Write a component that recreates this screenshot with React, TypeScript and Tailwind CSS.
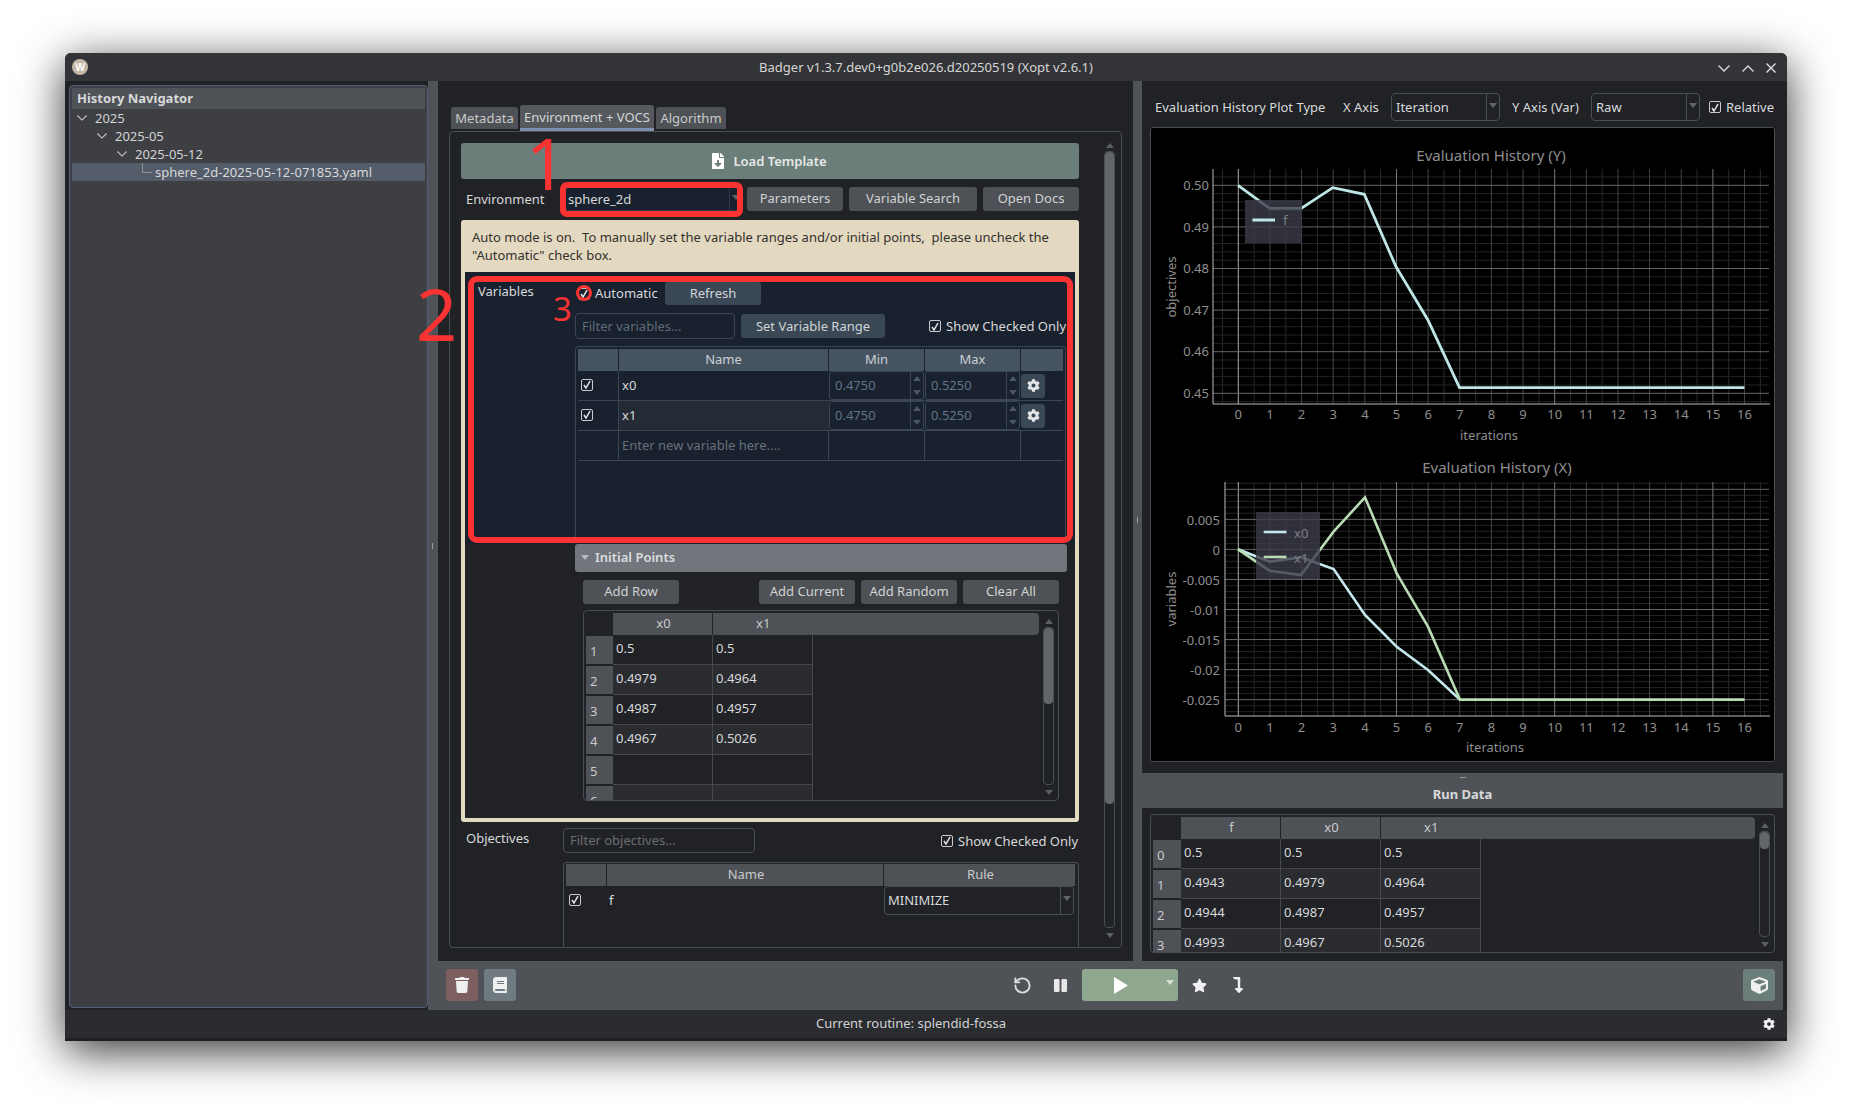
import React from "react";
import { FaCog, FaFileDownload, FaTrash, FaBook, FaPause, FaStar, FaCube, FaLevelDownAlt } from "react-icons/fa";
import { RotateCcw } from "lucide-react";

const Tri = ({ up = false, className = "" }: { up?: boolean; className?: string }) => (
  <svg width="8" height="5" viewBox="0 0 8 5" className={className}>
    <path d={up ? "M0 5 L4 0 L8 5 Z" : "M0 0 L8 0 L4 5 Z"} fill="currentColor" />
  </svg>
);

const Chev = ({ up = false, w = 12, h = 7 }: { up?: boolean; w?: number; h?: number }) => (
  <svg width={w} height={h} viewBox="0 0 12 7" className="shrink-0">
    <path d={up ? "M0.5 6.5 L6 1 L11.5 6.5" : "M0.5 0.5 L6 6 L11.5 0.5"} stroke="currentColor" strokeWidth="1.3" fill="none" />
  </svg>
);

const Check = ({ className = "" }: { className?: string }) => (
  <span className={`flex h-[12px] w-[12px] shrink-0 items-center justify-center rounded-[2px] border border-[#c9cbcd] ${className}`}>
    <svg width="8" height="9" viewBox="0 0 8 9">
      <path d="M1 5 L3 8 L7 1" stroke="#e8e8e8" strokeWidth="1.5" fill="none" />
    </svg>
  </span>
);

const Btn = ({ children, className = "" }: { children: React.ReactNode; className?: string }) => (
  <div className={`flex h-[24px] w-[96px] shrink-0 items-center justify-center rounded-[3px] bg-[#4e5156] pb-[2px] text-[#d2d3d4] ${className}`}>{children}</div>
);

const Combo = ({ text, className = "", textCls = "pl-[4px]", border = "border-[#4b4e53]" }: { text: string; className?: string; textCls?: string; border?: string }) => (
  <div className={`flex shrink-0 items-center rounded-[4px] border ${border} ${className}`}>
    <span className={`flex-1 text-[#d8d9da] ${textCls}`}>{text}</span>
    <span className={`flex h-full w-[13px] items-center justify-center border-l ${border} pb-[4px] text-[#62666b]`}>
      <Tri />
    </span>
  </div>
);

const Scroll = ({ thumb, className = "", arrowCls = "mt-[6px]" }: { thumb: number; className?: string; arrowCls?: string }) => (
  <div className={`flex h-full w-[11px] shrink-0 flex-col items-center text-[#5b5e63] ${className}`}>
    <Tri up className={`shrink-0 ${arrowCls}`} />
    <div className="mt-[3px] w-full flex-1 rounded-[4px] border border-[#4a4d52]">
      <div className="rounded-[4px] bg-[#62656a]" style={{ height: thumb }} />
    </div>
    <Tri className="mb-[5px] mt-[5px] shrink-0" />
  </div>
);

type TableProps = { heads: string[]; rows: string[][]; labels: string[]; corner: number; thumb: number; className?: string };
const DataTable = ({ heads, rows, labels, corner, thumb, className = "" }: TableProps) => (
  <div className={`flex rounded-[4px] border border-[#4a4d52] pl-[2px] pr-[4px] pt-[2px] ${className}`}>
    <div className="flex-1 overflow-hidden">
      <div className="flex h-[22px] text-[#c9cacb]">
        <div style={{ width: corner }} />
        {heads.map((h, i) => (
          <div key={h} className={`mr-[1px] flex items-center bg-[#4e5156] pb-[2px] ${i === heads.length - 1 ? "flex-1 justify-start rounded-r-[4px] pl-[43px]" : "w-[99px] justify-center pl-[2px]"}`}>
            {h}
          </div>
        ))}
      </div>
      {rows.map((row, i) => (
        <div key={i} className="flex h-[30px]">
          <div className="mb-[1px] mt-[1px] flex items-end bg-[#4e5156] pb-[4px] pl-[4px] text-[#c9cacb]" style={{ width: corner }}>
            {labels[i]}
          </div>
          {row.map((c, j) => (
            <div key={j} className={`flex w-[100px] items-start border-b border-r border-[#46484c] pl-[3px] pt-[4px] text-[#d8d9da] ${i % 2 ? "bg-[#2a2c30]" : "bg-[#202226]"}`}>
              {c}
            </div>
          ))}
        </div>
      ))}
    </div>
    <Scroll thumb={thumb} className="ml-[3px]" />
  </div>
);

const CheckedOnly = ({ className = "" }: { className?: string }) => (
  <div className={`flex items-center gap-[5px] text-[#d8d9da] ${className}`}>
    <Check />
    <span className="whitespace-nowrap">Show Checked Only</span>
  </div>
);

const Spin = ({ v }: { v: string }) => (
  <div className="flex h-[29px] w-[95px] items-center rounded-[3px] border border-[#3a4654] text-[#62748a]">
    <span className="flex-1 pb-[1px] pl-[5px]">{v}</span>
    <span className="flex h-full w-[13px] flex-col items-center justify-around border-l border-[#3a4654] text-[#4a5666]">
      <Tri up />
      <Tri />
    </span>
  </div>
);

const VarRow = ({ name, min, max, alt }: { name: string; min: string; max: string; alt?: boolean }) => (
  <div className="grid h-[30px] grid-cols-[41px_210px_96px_96px_43px] border-b border-[#3a4654]">
    <div className="flex items-center border-r border-[#3a4654] pb-[2px] pl-[3px]"><Check /></div>
    <div className={`flex items-center pb-[2px] pl-[3px] text-[#d8dadc] ${alt ? "bg-[#252b35]" : ""}`}>{name}</div>
    <Spin v={min} />
    <Spin v={max} />
    <div className="flex items-center">
      <div className="flex h-[24px] w-[24px] items-center justify-center rounded-[3px] bg-[#3a4755] pb-[1px]">
        <FaCog size={13} color="#e4e6e8" />
      </div>
    </div>
  </div>
);

const xs = Array.from({ length: 17 }, (_, i) => 1238.3 + 31.64 * i);

const Grid = ({ left, top, bottom, yStart, yStep, yCount }: { left: number; top: number; bottom: number; yStart: number; yStep: number; yCount: number }) => {
  const right = 1769;
  const minorX: number[] = [];
  for (let i = -1; i < 17; i++) minorX.push(1238.3 + 31.64 * i + 15.82);
  const minorY: number[] = [];
  for (let k = -1; k <= yCount; k++) for (let m = 1; m < 5; m++) minorY.push(yStart + yStep * k + (yStep * m) / 5);
  return (
    <g>
      {minorX.filter((x) => x > left).map((x) => <line key={x} x1={x} x2={x} y1={top} y2={bottom} stroke="#2a2a2a" />)}
      {minorY.filter((y) => y > top && y < bottom).map((y) => <line key={y} x1={left} x2={right} y1={y} y2={y} stroke="#232323" />)}
      {xs.map((x, i) => <line key={x} x1={x} x2={x} y1={top} y2={bottom} stroke={i === 0 ? "#aaa" : i % 5 === 0 ? "#777" : "#444"} />)}
      {Array.from({ length: yCount }, (_, k) => yStart + yStep * k).map((y) => <line key={y} x1={left} x2={right} y1={y} y2={y} stroke="#666" />)}
      <line x1={left} x2={left} y1={top} y2={bottom} stroke="#bbb" />
      <line x1={left} x2={1770} y1={bottom} y2={bottom} stroke="#bbb" />
    </g>
  );
};

const tickFill = "#8e8e8e";
const Plots = () => (
  <svg width="623" height="633" viewBox="1151 128 623 633" className="block" fontFamily="Noto Sans, sans-serif" fontSize="13">
    <rect x="1151" y="128" width="623" height="634" fill="#000" />
    <text x="1491" y="161" textAnchor="middle" fill="#8f8f8f" fontSize="15">Evaluation History (Y)</text>
    <Grid left={1213} top={169} bottom={404} yStart={185.3} yStep={41.6} yCount={6} />
    {["0.50", "0.49", "0.48", "0.47", "0.46", "0.45"].map((t, i) => (
      <text key={t} x="1209" y={190 + 41.6 * i} textAnchor="end" fill={tickFill}>{t}</text>
    ))}
    {xs.map((x, i) => <text key={x} x={x} y="419" textAnchor="middle" fill={tickFill}>{i}</text>)}
    <text x="1489" y="440" textAnchor="middle" fill={tickFill}>iterations</text>
    <text transform="translate(1176 287) rotate(-90)" textAnchor="middle" fill={tickFill}>objectives</text>
    <polyline points="1238,185.3 1269.6,208.3 1301.2,208.3 1332.8,187.7 1364.3,194.3 1396,266.7 1427.9,320 1459.5,387.7 1744.4,387.7" fill="none" stroke="#bfe6e6" strokeWidth="2.8" />
    <rect x="1245" y="200" width="57" height="43" fill="rgba(60,60,74,0.8)" />
    <line x1="1252.4" x2="1275" y1="220" y2="220" stroke="#bfe6e6" strokeWidth="2.8" />
    <text x="1283" y="225" fill="#7d7d85">f</text>

    <text x="1497" y="473" textAnchor="middle" fill="#8f8f8f" fontSize="15">Evaluation History (X)</text>
    <Grid left={1225} top={482} bottom={716} yStart={489.3} yStep={30.05} yCount={8} />
    {["0.005", "0", "-0.005", "-0.01", "-0.015", "-0.02", "-0.025"].map((t, i) => (
      <text key={t} x="1220" y={524.5 + 30.05 * i} textAnchor="end" fill={tickFill}>{t}</text>
    ))}
    {xs.map((x, i) => <text key={x} x={x} y="732" textAnchor="middle" fill={tickFill}>{i}</text>)}
    <text x="1495" y="752" textAnchor="middle" fill={tickFill}>iterations</text>
    <text transform="translate(1176 599) rotate(-90)" textAnchor="middle" fill={tickFill}>variables</text>
    <polyline points="1238,549.3 1269.6,561.7 1301,557.3 1333.6,569 1365,615 1396.7,646.7 1428,670 1460,699.7 1744.4,699.7" fill="none" stroke="#c5e8ee" strokeWidth="2.6" />
    <polyline points="1238,549.3 1269.6,570.7 1301,575 1333.6,531.7 1365,497.3 1396.7,573.3 1428,626.7 1460,699.7 1744.4,699.7" fill="none" stroke="#b9dcb4" strokeWidth="2.6" />
    <rect x="1256" y="512" width="64" height="67" fill="rgba(60,60,74,0.8)" />
    <line x1="1263.7" x2="1286.5" y1="532" y2="532" stroke="#c5e8ee" strokeWidth="2.6" />
    <text x="1294" y="538" fill="#7d7d85">x0</text>
    <line x1="1263.7" x2="1286.5" y1="557" y2="557" stroke="#b9dcb4" strokeWidth="2.6" />
    <text x="1294" y="563" fill="#7d7d85">x1</text>
  </svg>
);

const TreeRow = ({ pad, label }: { pad: number; label: string }) => (
  <div className="flex h-[18px] items-center text-[#d2d3d5]" style={{ paddingLeft: pad }}>
    <span className="mr-[8px] text-[#c8c9cb]"><Chev w={10} h={6} /></span>
    {label}
  </div>
);

export default function App() {
  return (
    <div className="relative h-[1119px] w-[1852px] overflow-hidden bg-white pl-[65px] pt-[53px] font-['Noto_Sans',sans-serif] text-[13px] leading-[18px]">
      <div className="flex h-[988px] w-[1722px] flex-col rounded-t-[6px] bg-[#1f2023] shadow-[0_10px_45px_rgba(0,0,0,0.8)]">
        {/* Title bar */}
        <div className="relative flex h-[28px] shrink-0 items-center justify-center rounded-t-[6px] bg-[#333437] text-[#d6d6d6]">
          <div className="absolute left-[7px] top-[6px] flex h-[16px] w-[16px] items-center justify-center rounded-full bg-[#c6b8a6] text-[10px] font-bold text-white">W</div>
          Badger v1.3.7.dev0+g0b2e026.d20250519 (Xopt v2.6.1)
          <div className="absolute right-[11px] top-[10px] flex items-center gap-[12px] text-[#e0e0e0]">
            <Chev />
            <Chev up />
            <svg width="10" height="10" viewBox="0 0 10 10">
              <path d="M0.5 0.5 L9.5 9.5 M9.5 0.5 L0.5 9.5" stroke="currentColor" strokeWidth="1.4" />
            </svg>
          </div>
        </div>
        {/* Body */}
        <div className="flex h-[929px] shrink-0 bg-[#202226] pr-[4px]">
          {/* History navigator */}
          <div className="ml-[4px] mt-[4px] h-[923px] w-[359px] shrink-0 rounded-[4px] border border-[#51607a] bg-[#3e3f43] px-[2px] pt-[2px]">
            <div className="flex h-[21px] items-center bg-[#4f5257] pb-[2px] pl-[5px] font-bold text-[#d8d9da]">History Navigator</div>
            <TreeRow pad={5} label="2025" />
            <TreeRow pad={25} label="2025-05" />
            <TreeRow pad={45} label="2025-05-12" />
            <div className="relative flex h-[18px] items-center bg-[#545c69] pl-[83px] text-[#d8d9da]">
              <span className="absolute left-[70px] top-0 h-[10px] w-[10px] border-b border-l border-[#8a909a]" />
              sphere_2d-2025-05-12-071853.yaml
            </div>
          </div>
          {/* Right of navigator */}
          <div className="flex min-w-0 flex-1 flex-col">
            <div className="flex h-[880px] shrink-0">
              {/* Splitter */}
              <div className="relative w-[10px] shrink-0 bg-[#4f5257]">
                <span className="absolute left-[4px] top-[462px] h-[6px] w-[1px] bg-[#9a9a9a]" />
              </div>
              {/* Centre */}
              <div className="w-[695px] shrink-0 overflow-hidden pt-[24px]">
                <div className="ml-[13px] flex h-[26px] items-start gap-[2px] text-[#c8c9ca]">
                  <div className="mt-[2px] flex h-[22px] w-[67px] items-center justify-center rounded-t-[3px] bg-[#4e5156] pb-[1px]">Metadata</div>
                  <div className="flex h-[26px] w-[134px] items-center justify-center rounded-t-[3px] border-b-[3px] border-[#7d90ad] bg-[#55585d] text-[#d4d5d6]">Environment + VOCS</div>
                  <div className="mt-[2px] flex h-[22px] w-[70px] items-center justify-center rounded-t-[3px] bg-[#4e5156] pb-[1px]">Algorithm</div>
                </div>
                <div className="ml-[11px] flex h-[817px] w-[673px] overflow-hidden rounded-[4px] border border-[#4a4d52] pl-[11px] pt-[11px]">
                  <div className="w-[618px] shrink-0">
                    <div className="flex h-[36px] items-center justify-center gap-[7px] rounded-[3px] bg-[#6b7e7a] pr-[3px] font-semibold text-[#e6e8e8]">
                      <FaFileDownload size={16} color="#fff" />
                      Load Template
                    </div>
                    <div className="mt-[8px] flex h-[24px] items-center">
                      <span className="w-[104px] pl-[5px] text-[#d8d9da]">Environment</span>
                      <Combo text="sphere_2d" textCls="pl-[2px]" className="h-[24px] w-[178px] bg-[#18212d]" border="border-[#2c3a4a]" />
                      <Btn className="ml-[4px]">Parameters</Btn>
                      <Btn className="ml-[6px] w-[128px]">Variable Search</Btn>
                      <Btn className="ml-[6px]">Open Docs</Btn>
                    </div>
                    {/* Cream */}
                    <div className="mt-[9px] h-[602px] rounded-[3px] bg-[#e3d9c1] px-[4px]">
                      <div className="h-[52px] whitespace-pre pl-[7px] pt-[8px] text-[#33312c]">
                        {'Auto mode is on.  To manually set the variable ranges and/or initial points,  please uncheck the\n"Automatic" check box.'}
                      </div>
                      <div className="h-[546px] bg-[#202226]">
                        <div className="flex h-[272px] bg-[#18212d]">
                          <div className="w-[110px] shrink-0 pl-[13px] pt-[10px] text-[#d8dadc]">Variables</div>
                          <div className="w-[491px] shrink-0 pt-[10px]">
                            <div className="flex h-[23px] items-center">
                              <Check className="ml-[3px]" />
                              <span className="ml-[5px] w-[70px] pb-[2px] text-[#d8dadc]">Automatic</span>
                              <div className="flex h-[23px] w-[96px] items-center justify-center rounded-[3px] bg-[#3a4755] pb-[2px] text-[#d2d5d8]">Refresh</div>
                            </div>
                            <div className="mt-[8px] flex h-[26px] items-center">
                              <div className="flex h-[26px] w-[160px] items-center rounded-[4px] border border-[#3a4654] pl-[6px] text-[#5f6b78]">Filter variables...</div>
                              <div className="ml-[6px] flex h-[24px] w-[144px] items-center justify-center rounded-[3px] bg-[#3a4755] pb-[1px] text-[#d2d5d8]">Set Variable Range</div>
                              <CheckedOnly className="ml-auto w-[137px]" />
                            </div>
                            <div className="mt-[7px] h-[191px] rounded-t-[4px] border border-b-0 border-[#3a4654] px-[2px] pt-[2px]">
                              <div className="grid h-[22px] grid-cols-[41px_210px_96px_96px_43px] text-[#cdd1d5]">
                                {["", "Name", "Min", "Max", ""].map((h, i) => (
                                  <div key={i} className="mr-[1px] flex items-center justify-center bg-[#465361] pb-[2px]">{h}</div>
                                ))}
                              </div>
                              <VarRow name="x0" min="0.4750" max="0.5250" />
                              <VarRow name="x1" min="0.4750" max="0.5250" alt />
                              <div className="grid h-[30px] grid-cols-[41px_210px_96px_96px_43px] border-b border-[#3a4654]">
                                <div className="border-r border-[#3a4654]" />
                                <div className="flex items-center border-r border-[#3a4654] pb-[2px] pl-[3px] text-[#66707c]">Enter new variable here....</div>
                                <div className="border-r border-[#3a4654]" />
                                <div className="border-r border-[#3a4654]" />
                                <div />
                              </div>
                            </div>
                          </div>
                        </div>
                        {/* Initial points */}
                        <div className="ml-[110px] w-[492px]">
                          <div className="flex h-[28px] items-center rounded-[3px] bg-[#71757c] pb-[2px] pl-[6px] font-semibold text-[#dcdddf]">
                            <Tri className="mr-[6px] text-[#b8babd]" />
                            Initial Points
                          </div>
                          <div className="mt-[8px] flex h-[24px] px-[8px]">
                            <Btn>Add Row</Btn>
                            <Btn className="ml-auto">Add Current</Btn>
                            <Btn className="ml-[6px]">Add Random</Btn>
                            <Btn className="ml-[6px]">Clear All</Btn>
                          </div>
                          <DataTable
                            className="ml-[8px] mt-[6px] h-[191px] w-[476px]"
                            heads={["x0", "x1"]}
                            labels={["1", "2", "3", "4", "5", "6"]}
                            corner={27}
                            thumb={76}
                            rows={[["0.5", "0.5"], ["0.4979", "0.4964"], ["0.4987", "0.4957"], ["0.4967", "0.5026"], ["", ""], ["", ""]]}
                          />
                        </div>
                      </div>
                    </div>
                    {/* Objectives */}
                    <div className="mt-[6px] flex h-[25px]">
                      <span className="w-[102px] pl-[5px] pt-[1px] text-[#d8d9da]">Objectives</span>
                      <div className="flex h-[25px] w-[192px] items-center rounded-[4px] border border-[#4a4d52] pb-[2px] pl-[6px] text-[#6a6d72]">Filter objectives...</div>
                      <CheckedOnly className="ml-auto w-[138px]" />
                    </div>
                    <div className="ml-[102px] mt-[9px] h-[90px] rounded-t-[4px] border border-b-0 border-[#4a4d52] px-[2px] pt-[1px]">
                      <div className="grid h-[22px] grid-cols-[41px_277px_192px] text-[#c9cacb]">
                        {["", "Name", "Rule"].map((h, i) => (
                          <div key={i} className="mr-[1px] flex items-center justify-center bg-[#4e5156] pb-[2px] pl-[2px]">{h}</div>
                        ))}
                      </div>
                      <div className="grid h-[29px] grid-cols-[41px_277px_192px]">
                        <div className="flex items-center pb-[2px] pl-[3px]"><Check /></div>
                        <div className="flex items-center pb-[2px] pl-[2px] text-[#d8d9da]">f</div>
                        <Combo text="MINIMIZE" textCls="pb-[2px] pl-[3px]" className="h-[29px] w-[190px]" />
                      </div>
                    </div>
                  </div>
                  <div className="ml-[25px] h-[800px]">
                    <Scroll thumb={652} arrowCls="mt-0" />
                  </div>
                </div>
              </div>
              {/* Splitter */}
              <div className="relative w-[9px] shrink-0 bg-[#4f5257]">
                <span className="absolute left-[4px] top-[436px] h-[6px] w-[1px] bg-[#9a9a9a]" />
              </div>
              {/* Right */}
              <div className="flex min-w-0 flex-1 flex-col">
                <div className="h-[692px] shrink-0 pl-[8px] pt-[12px]">
                  <div className="flex h-[28px] items-center text-[#d8d9da]">
                    <span className="ml-[5px] w-[188px]">Evaluation History Plot Type</span>
                    <span className="w-[48px]">X Axis</span>
                    <Combo text="Iteration" className="h-[28px] w-[109px]" />
                    <span className="ml-[12px] w-[79px]">Y Axis (Var)</span>
                    <Combo text="Raw" className="h-[28px] w-[109px]" />
                    <Check className="ml-[9px]" />
                    <span className="ml-[5px]">Relative</span>
                  </div>
                  <div className="mt-[6px] w-[625px] overflow-hidden rounded-[3px] border border-[#4a4d52]">
                    <Plots />
                  </div>
                </div>
                <div className="relative flex h-[35px] shrink-0 items-center justify-center bg-[#4f5257] pt-[7px] font-bold text-[#d8d9da]">
                  <span className="absolute left-[318px] top-[4px] h-[1px] w-[6px] bg-[#9a9a9a]" />
                  Run Data
                </div>
                <div className="pl-[8px] pt-[6px]">
                  <DataTable
                    className="h-[139px] w-[625px]"
                    heads={["f", "x0", "x1"]}
                    labels={["0", "1", "2", "3"]}
                    corner={28}
                    thumb={17}
                    rows={[["0.5", "0.5", "0.5"], ["0.4943", "0.4979", "0.4964"], ["0.4944", "0.4987", "0.4957"], ["0.4993", "0.4967", "0.5026"]]}
                  />
                </div>
              </div>
            </div>
            {/* Toolbar */}
            <div className="flex h-[49px] shrink-0 items-center bg-[#4f5257] pb-[1px] pl-[18px]">
              <div className="flex h-[32px] w-[32px] items-center justify-center rounded-[3px] bg-[#7d5f60]"><FaTrash size={16} color="#f0f0f0" /></div>
              <div className="ml-[6px] flex h-[32px] w-[32px] items-center justify-center rounded-[3px] bg-[#6f7b80]"><FaBook size={16} color="#f0f0f0" /></div>
              <RotateCcw size={19} color="#dcdcdc" strokeWidth={2.4} className="ml-[497px]" />
              <FaPause size={15} color="#e8e8e8" className="ml-[21px]" />
              <div className="relative ml-[14px] flex h-[32px] w-[96px] items-center rounded-[3px] bg-[#8fa68f] pl-[32px]">
                <svg width="14" height="17" viewBox="0 0 14 17"><path d="M0 0 L14 8.5 L0 17 Z" fill="#fff" /></svg>
                <Tri className="absolute right-[4px] top-[11px] text-[#d8e0d8]" />
              </div>
              <FaStar size={15} color="#f0f0f0" className="ml-[14px]" />
              <FaLevelDownAlt size={16} color="#f0f0f0" className="ml-[23px]" />
              <div className="ml-[497px] flex h-[32px] w-[32px] items-center justify-center rounded-[3px] bg-[#6b7e7a]"><FaCube size={17} color="#f0f0f0" /></div>
            </div>
          </div>
        </div>
        {/* Status */}
        <div className="relative flex h-[28px] shrink-0 items-center justify-center bg-[#2a2c30] pb-[3px] pr-[30px] text-[#d2d3d4]">
          Current routine: splendid-fossa
          <FaCog size={12} color="#f0f0f0" className="absolute left-[1698px] top-[8px]" />
        </div>
      </div>

      {/* Red annotations drawn over the screenshot */}
      <div className="absolute left-[560px] top-[182px] h-[35px] w-[183px] rounded-[7px] border-[6px] border-[#f93232]" />
      <div className="absolute left-[468px] top-[276px] h-[267px] w-[605px] rounded-[9px] border-[6px] border-[#f93232]" />
      <div className="absolute left-[576px] top-[285px] h-[16px] w-[16px] rounded-full border-[3px] border-[#f93232]" />
      <span className="absolute left-[526px] top-[127px] text-[71px] font-normal leading-[71px] text-[#f93232]">1</span>
      <span className="absolute left-[416px] top-[277px] text-[72px] font-normal leading-[72px] text-[#f93232]">2</span>
      <span className="absolute left-[553px] top-[292px] text-[33px] font-normal leading-[33px] text-[#f93232]">3</span>
    </div>
  );
}
